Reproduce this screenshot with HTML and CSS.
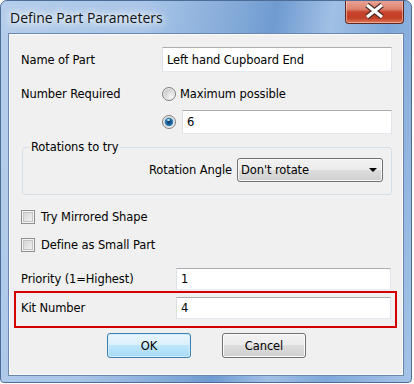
FILE: index.html
```html
<!DOCTYPE html>
<html lang="en">
<head>
    <meta charset="UTF-8">
    <title>Define Part Parameters</title>
    <link rel="stylesheet" href="styles.css">
</head>
<body>
    <div class="window">
        <div class="titlebar">
            <span class="title">Define Part Parameters</span>
            <button class="close" aria-label="Close">
                <svg width="59" height="24" viewBox="0 0 59 24">
                    <path d="M22 6 L37 18 M37 6 L22 18" stroke="#4a2a26" stroke-width="5.5" fill="none"/>
                    <path d="M22 6 L37 18 M37 6 L22 18" stroke="#fff" stroke-width="3.2" fill="none"/>
                </svg>
            </button>
        </div>

        <div class="client">
            <div class="row row-name">
                <span class="label">Name of Part</span>
                <div class="field">Left hand Cupboard End</div>
            </div>

            <div class="row row-radio">
                <span class="label">Number Required</span>
                <span class="radio"></span>
                <span class="radio-text">Maximum possible</span>
            </div>

            <div class="row row-count">
                <span class="label"></span>
                <span class="radio checked"></span>
                <div class="field">6</div>
            </div>

            <fieldset class="group">
                <legend>Rotations to try</legend>
                <div class="row row-angle">
                    <span>Rotation Angle</span>
                    <div class="select">
                        <span>Don't rotate</span>
                        <span class="arrow"></span>
                    </div>
                </div>
            </fieldset>

            <div class="row row-check">
                <span class="checkbox"></span>
                <span>Try Mirrored Shape</span>
            </div>
            <div class="row row-check second">
                <span class="checkbox"></span>
                <span>Define as Small Part</span>
            </div>

            <div class="row row-priority">
                <span class="label wide">Priority (1=Highest)</span>
                <div class="field">1</div>
            </div>

            <div class="kit-box">
                <div class="row row-kit">
                    <span class="label wide">Kit Number</span>
                    <div class="field">4</div>
                </div>
            </div>

            <div class="buttons">
                <button class="btn btn-ok">OK</button>
                <button class="btn btn-cancel">Cancel</button>
            </div>
        </div>
    </div>
</body>
</html>
```

FILE: styles.css
```css
* {
    box-sizing: border-box;
}
body {
    margin: 0;
    background: #fff;
    color: #000;
    font-family: "DejaVu Sans", Verdana, sans-serif;
    font-size: 11.5px;
    letter-spacing: -0.1px;
}
.window {
    width: 412px;
    height: 383px;
    border: 1px solid #4d6d99;
    border-radius: 7px 7px 4px 4px;
    background: linear-gradient(100deg, #b4cdea 0%, #a9c6e8 30%, #7ea6d6 52%, #6f9bd1 58%, #a1c0e5 70%, #7fa8d9 82%, #a6c4e7 100%);
    display: flex;
    flex-direction: column;
    overflow: hidden;
}
.titlebar {
    height: 32px;
    flex: none;
    display: flex;
    justify-content: space-between;
    align-items: flex-start;
}
.title {
    font-family: "Open Sans", sans-serif;
    font-size: 14px;
    letter-spacing: 0;
    line-height: 18px;
    padding: 8px 0 0 9px;
    color: #111;
    text-shadow: 0 0 6px #fff, 0 0 10px #fff, 0 0 14px rgba(255, 255, 255, 0.8);
}
.close {
    width: 59px;
    height: 24px;
    margin: -1px 7px 0 0;
    padding: 0;
    border: 1px solid #5e2a22;
    border-top: none;
    border-radius: 0 0 4px 4px;
    background: linear-gradient(#eba595 0%, #dd826e 40%, #c8432c 52%, #c23f27 78%, #e07a58 100%);
    box-shadow: inset 0 0 0 1px rgba(255, 220, 210, 0.5);
}
.close svg {
    display: block;
    margin: -1px 0 0 -1px;
}
.client {
    margin-left: 7px;
    width: 396px;
    height: 343px;
    flex: none;
    border: 1px solid #6a87b0;
    background: #f0f0f0;
    box-shadow: inset 0 0 0 1px #fbfbfb;
    padding: 13px 11px 0 12px;
    display: flex;
    flex-direction: column;
}
.row {
    display: flex;
    align-items: center;
    flex: none;
}
.label {
    width: 141px;
    flex: none;
}
.label.wide {
    width: 155px;
}
.field {
    flex: 1;
    height: 25px;
    background: #fff;
    border: 1px solid;
    border-color: #abadb3 #e2e3ea #e3e9ef #dbdfe6;
    padding-left: 4px;
    display: flex;
    align-items: center;
}
.row-radio {
    height: 21px;
    margin-top: 11px;
}
.radio {
    width: 14px;
    height: 14px;
    flex: none;
    border-radius: 50%;
    border: 1px solid #7d7f80;
    background: radial-gradient(circle at 65% 70%, #f8f8f8 0%, #dcdcdc 40%, #b8b8b8 100%);
    box-shadow: inset 0 0 0 1px #f2f2f2;
    position: relative;
}
.radio.checked {
    background: radial-gradient(circle at 50% 50%, #0f3f6a 0, #1d5f94 2.5px, #3d8cc6 4px, transparent 4.6px),
                radial-gradient(circle at 65% 70%, #f8f8f8 0%, #dcdcdc 40%, #b8b8b8 100%);
}
.radio.checked::after {
    content: "";
    position: absolute;
    left: 4px;
    top: 3px;
    width: 3px;
    height: 2px;
    border-radius: 50%;
    background: rgba(210, 240, 255, 0.9);
}
.radio-text {
    margin-left: 4px;
}
.row-count {
    height: 24px;
    margin-top: 6px;
}
.row-count .field {
    height: 24px;
    margin-left: 6px;
}
.group {
    margin: 6px 0 0 1px;
    padding: 3px 8px 12px 6px;
    border: 1px solid #d5dfe5;
    border-radius: 3px;
    min-width: 0;
    flex: none;
}
.group legend {
    padding: 0 2px;
    line-height: 15px;
}
.row-angle {
    justify-content: flex-end;
    gap: 5px;
}
.select {
    width: 146px;
    height: 24px;
    border: 1px solid #707070;
    border-radius: 3px;
    background: linear-gradient(#f2f2f2, #ebebeb 50%, #dddddd 50%, #cfcfcf);
    box-shadow: inset 0 0 0 1px #fbfbfb;
    display: flex;
    align-items: center;
    justify-content: space-between;
    padding: 0 5px 0 3px;
}
.arrow {
    width: 0;
    height: 0;
    border-left: 4px solid transparent;
    border-right: 4px solid transparent;
    border-top: 4px solid #000;
}
.row-check {
    height: 20px;
    margin-top: 12px;
    gap: 6px;
}
.row-check.second {
    margin-top: 8px;
}
.checkbox {
    width: 14px;
    height: 14px;
    flex: none;
    border: 1px solid #8e8f8f;
    background: linear-gradient(135deg, #cfcfcf, #f6f6f6);
    box-shadow: inset 0 0 0 1px #f4f4f4, inset 0 0 0 2px #c4c4c4;
}
.row-priority {
    margin-top: 13px;
}
.row-priority .field,
.row-kit .field {
    height: 22px;
}
.row-priority .field {
    margin-right: 1px;
}
.kit-box {
    margin: 1px -5px 0 -7px;
    padding: 4px 4px 7px 5px;
    border: 2px solid #d40000;
    flex: none;
}
.buttons {
    margin-top: 5px;
    display: flex;
    justify-content: center;
    gap: 31px;
}
.btn {
    width: 84px;
    height: 25px;
    border-radius: 3px;
    font: inherit;
    letter-spacing: inherit;
    color: #000;
    padding: 0;
}
.btn-ok {
    border: 1px solid #3c7fb1;
    background: linear-gradient(#eaf6fd, #d9f0fc 50%, #bee6fd 50%, #a7d9f5);
    box-shadow: inset 0 0 0 1px #d3eefc;
}
.btn-cancel {
    border: 1px solid #707070;
    background: linear-gradient(#f2f2f2, #ebebeb 50%, #dddddd 50%, #cfcfcf);
    box-shadow: inset 0 0 0 1px #fcfcfc;
}
```
